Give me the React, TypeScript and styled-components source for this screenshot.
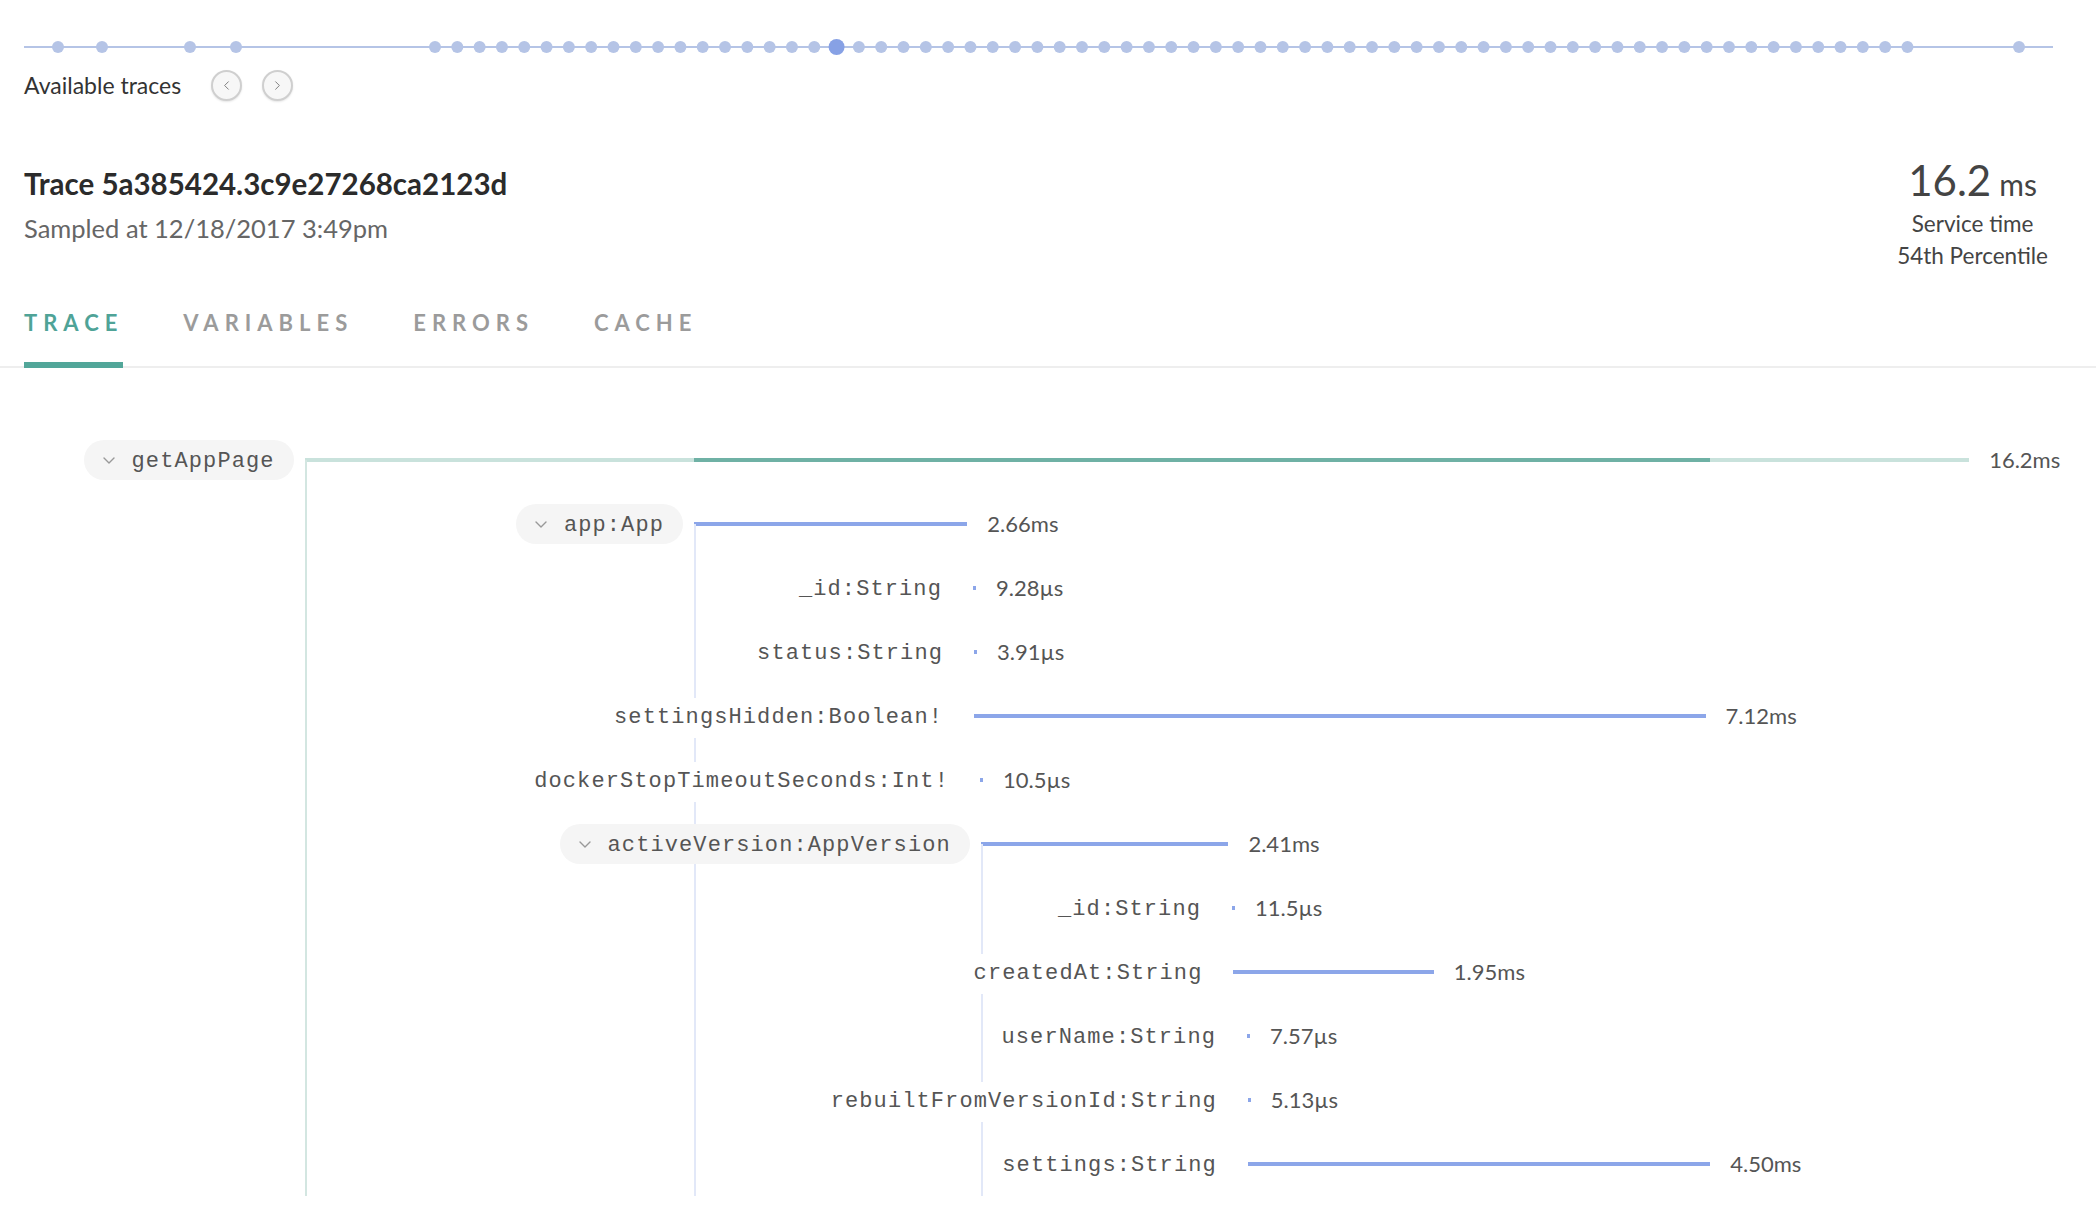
import React from 'react';
import styled, { createGlobalStyle } from 'styled-components';
import { ChevronLeft, ChevronRight } from 'lucide-react';

const GlobalStyle = createGlobalStyle`
  html, body { margin: 0; padding: 0; background: #fff; }
  body {
    font-family: Lato, "Noto Sans", "Liberation Sans", sans-serif;
    color: #333;
    -webkit-font-smoothing: antialiased;
  }
  * { box-sizing: border-box; }
`;

const Page = styled.div`
  width: 2096px;
  min-height: 1220px;
  overflow: hidden;
`;

const TimelineSvg = styled.svg`
  display: block;
  margin-top: 37px;
`;

const NavRow = styled.div`
  display: flex;
  align-items: center;
  height: 30px;
  margin-top: 13px;
  padding-left: 24px;
`;

const NavLabel = styled.span`
  font-size: 23px;
  line-height: 30px;
  color: #333;
`;

const NavButtons = styled.div`
  display: flex;
  gap: 20px;
  margin-left: 30px;
`;

const NavButton = styled.button`
  width: 31px;
  height: 31px;
  padding: 0;
  border-radius: 50%;
  border: 2px solid #cfcfcf;
  background: #f7f7f7;
  box-shadow: 0 1px 2px rgba(0, 0, 0, 0.1);
  display: flex;
  align-items: center;
  justify-content: center;
  color: #777;
`;

const Summary = styled.div`
  display: flex;
  justify-content: space-between;
  align-items: flex-start;
  margin-top: 56px;
  padding: 0 48px 0 24px;
`;

const TitleBlock = styled.div`
  padding-top: 10px;
`;

const Title = styled.h1`
  margin: 0;
  font-size: 29.5px;
  line-height: 36px;
  font-weight: 700;
  color: #2b2b2b;
`;

const Sampled = styled.div`
  margin-top: 8px;
  font-size: 25.5px;
  line-height: 36px;
  color: #666;
`;

const Stats = styled.div`
  text-align: center;
  color: #444;
`;

const StatValue = styled.div`
  font-size: 42px;
  line-height: 48px;
`;

const StatUnit = styled.span`
  font-size: 30px;
  margin-left: 8px;
`;

const StatLabel = styled.div`
  font-size: 22.5px;
  line-height: 32px;
`;

const Tabs = styled.nav`
  display: flex;
  gap: 60px;
  margin-top: 36px;
  padding-left: 24px;
  border-bottom: 2px solid #eeeeee;
`;

const Tab = styled.div<{ $active?: boolean }>`
  font-size: 22px;
  line-height: 30px;
  font-weight: 700;
  letter-spacing: 6px;
  padding-bottom: 24px;
  margin-bottom: -2px;
  color: ${(p) => (p.$active ? '#4fa397' : '#9b9b9b')};
  border-bottom: 6px solid ${(p) => (p.$active ? '#52a699' : 'transparent')};
`;

const Waterfall = styled.div`
  margin-top: 60px;
`;

const Group = styled.div`
  position: relative;
`;

const GuideLine = styled.div<{ $tone: 'root' | 'field' }>`
  position: absolute;
  top: 32px;
  bottom: 0;
  width: 2px;
  background: ${(p) => (p.$tone === 'root' ? '#d3e6e1' : '#e2e8f8')};
`;

const Row = styled.div`
  display: flex;
  align-items: center;
  height: 64px;
`;

const LabelCell = styled.div<{ $pill?: boolean }>`
  flex-shrink: 0;
  display: flex;
  justify-content: flex-end;
  align-items: center;
  padding-right: ${(p) => (p.$pill ? '11px' : '31px')};
`;

const FieldName = styled.span`
  position: relative;
  top: 2px;
  z-index: 1;
  font-family: "Liberation Mono", "DejaVu Sans Mono", monospace;
  font-size: 22px;
  letter-spacing: 1.1px;
  line-height: 40px;
  color: #555;
  background: #fff;
  padding-left: 6px;
  white-space: nowrap;
`;

const Pill = styled.div`
  position: relative;
  z-index: 1;
  display: flex;
  align-items: center;
  gap: 17px;
  height: 40px;
  padding: 0 19px;
  border-radius: 20px;
  background: #f5f5f5;
`;

const PillName = styled.span`
  position: relative;
  top: 2px;
  font-family: "Liberation Mono", "DejaVu Sans Mono", monospace;
  font-size: 22px;
  letter-spacing: 1.1px;
  line-height: 40px;
  color: #555;
  white-space: nowrap;
`;

const Bar = styled.div<{ $tone: 'root' | 'field' }>`
  flex-shrink: 0;
  display: flex;
  height: 4px;
  min-width: 3px;
  background: ${(p) => (p.$tone === 'root' ? '#c9e2dc' : '#8ca6e9')};
`;

const BarHighlight = styled.div`
  height: 100%;
  background: #6fb1a5;
`;

const Duration = styled.span`
  margin-left: 20px;
  font-size: 22px;
  line-height: 1;
  color: #555;
  white-space: nowrap;
`;

const X0 = 304.6;
const SCALE = 102.75;

type Span = {
  name: string;
  start: number;
  dur: number;
  label: string;
  children?: Span[];
};

const trace: Span = {
  name: 'getAppPage',
  start: 0,
  dur: 16.2,
  label: '16.2ms',
  children: [
    {
      name: 'app:App',
      start: 3.79,
      dur: 2.66,
      label: '2.66ms',
      children: [
        { name: '_id:String', start: 6.505, dur: 0.00928, label: '9.28µs' },
        { name: 'status:String', start: 6.515, dur: 0.00391, label: '3.91µs' },
        { name: 'settingsHidden:Boolean!', start: 6.515, dur: 7.12, label: '7.12ms' },
        { name: 'dockerStopTimeoutSeconds:Int!', start: 6.573, dur: 0.0105, label: '10.5µs' },
        {
          name: 'activeVersion:AppVersion',
          start: 6.581,
          dur: 2.41,
          label: '2.41ms',
          children: [
            { name: '_id:String', start: 9.026, dur: 0.0115, label: '11.5µs' },
            { name: 'createdAt:String', start: 9.04, dur: 1.95, label: '1.95ms' },
            { name: 'userName:String', start: 9.172, dur: 0.00757, label: '7.57µs' },
            { name: 'rebuiltFromVersionId:String', start: 9.18, dur: 0.00513, label: '5.13µs' },
            { name: 'settings:String', start: 9.18, dur: 4.5, label: '4.50ms' },
          ],
        },
      ],
    },
  ],
};

const extent = (s: Span): [number, number] => {
  let lo = Infinity;
  let hi = -Infinity;
  (s.children || []).forEach((c) => {
    lo = Math.min(lo, c.start);
    hi = Math.max(hi, c.start + c.dur);
    const [a, b] = extent(c);
    lo = Math.min(lo, a);
    hi = Math.max(hi, b);
  });
  return [lo, hi];
};

const PillChevron = () => (
  <svg width="12" height="7" viewBox="0 0 12 7" fill="none">
    <polyline points="1,1 6,6 11,1" stroke="#999" strokeWidth="1.4" strokeLinecap="round" strokeLinejoin="round" />
  </svg>
);

const SpanNode: React.FC<{ span: Span; depth: number }> = ({ span, depth }) => {
  const x = X0 + span.start * SCALE;
  const w = span.dur * SCALE;
  const hasChildren = !!span.children && span.children.length > 0;
  const tone = depth === 0 ? 'root' : 'field';
  let highlight: React.ReactNode = null;
  if (depth === 0 && hasChildren) {
    const [lo, hi] = extent(span);
    highlight = (
      <BarHighlight
        style={{ marginLeft: (lo - span.start) * SCALE, width: (hi - lo) * SCALE }}
      />
    );
  }
  const row = (
    <Row>
      <LabelCell $pill={hasChildren} style={{ width: x }}>
        {hasChildren ? (
          <Pill>
            <PillChevron />
            <PillName>{span.name}</PillName>
          </Pill>
        ) : (
          <FieldName>{span.name}</FieldName>
        )}
      </LabelCell>
      <Bar $tone={tone} style={{ width: w }}>
        {highlight}
      </Bar>
      <Duration>{span.label}</Duration>
    </Row>
  );
  if (!hasChildren) return row;
  return (
    <Group>
      <GuideLine $tone={tone} style={{ left: x }} />
      {row}
      {span.children!.map((c, i) => (
        <SpanNode key={i} span={c} depth={depth + 1} />
      ))}
    </Group>
  );
};

const earlyDots = [58, 102, 190, 236];
const denseDots = Array.from({ length: 67 }, (_, i) => 435 + i * 22.31);
const SELECTED = 18;

export default function App() {
  return (
    <Page>
      <GlobalStyle />
      <TimelineSvg width={2096} height={20}>
        <line x1={24} x2={2053} y1={10} y2={10} stroke="#b5c4e6" strokeWidth={2} />
        {earlyDots.map((cx) => (
          <circle key={`e${cx}`} cx={cx} cy={10} r={6} fill="#b5c4e6" />
        ))}
        {denseDots.map((cx, i) =>
          i === SELECTED ? null : <circle key={`d${i}`} cx={cx} cy={10} r={6} fill="#b5c4e6" />
        )}
        <circle cx={2019} cy={10} r={6} fill="#b5c4e6" />
        <circle cx={denseDots[SELECTED]} cy={10} r={8} fill="#87a1e5" />
      </TimelineSvg>
      <NavRow>
        <NavLabel>Available traces</NavLabel>
        <NavButtons>
          <NavButton aria-label="Previous trace">
            <ChevronLeft size={15} strokeWidth={1.5} />
          </NavButton>
          <NavButton aria-label="Next trace">
            <ChevronRight size={15} strokeWidth={1.5} />
          </NavButton>
        </NavButtons>
      </NavRow>
      <Summary>
        <TitleBlock>
          <Title>Trace 5a385424.3c9e27268ca2123d</Title>
          <Sampled>Sampled at 12/18/2017 3:49pm</Sampled>
        </TitleBlock>
        <Stats>
          <StatValue>
            16.2<StatUnit>ms</StatUnit>
          </StatValue>
          <StatLabel>Service time</StatLabel>
          <StatLabel>54th Percentile</StatLabel>
        </Stats>
      </Summary>
      <Tabs>
        <Tab $active>TRACE</Tab>
        <Tab>VARIABLES</Tab>
        <Tab>ERRORS</Tab>
        <Tab>CACHE</Tab>
      </Tabs>
      <Waterfall>
        <SpanNode span={trace} depth={0} />
      </Waterfall>
    </Page>
  );
}
